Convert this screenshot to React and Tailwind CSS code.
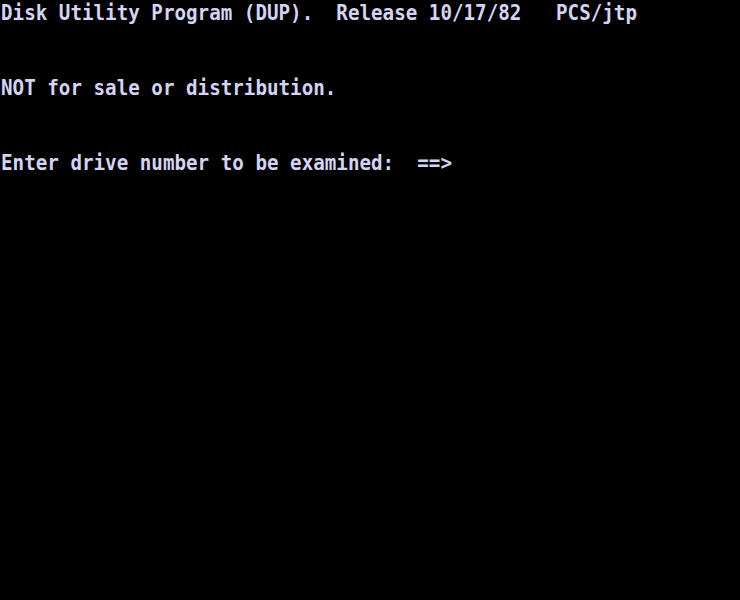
export default function App() {
  const rows = [
    "Disk Utility Program (DUP).  Release 10/17/82   PCS/jtp",
    "",
    "NOT for sale or distribution.",
    "",
    "Enter drive number to be examined:  ==>",
  ];
  while (rows.length < 16) rows.push("");
  return (
    <div className="w-[740px] h-[600px] bg-black overflow-hidden flex flex-col">
      {rows.map((r, i) => (
        <div key={i} className="h-[37.5px] shrink-0 pl-[1px] flex flex-col">
          <div
            className="whitespace-pre text-[22px] leading-[25px] text-[#d4d4f2] font-semibold origin-left scale-x-[0.873] w-max"
            style={{ fontFamily: '"DejaVu Sans Mono", monospace' }}
          >
            {r}
          </div>
        </div>
      ))}
    </div>
  );
}
